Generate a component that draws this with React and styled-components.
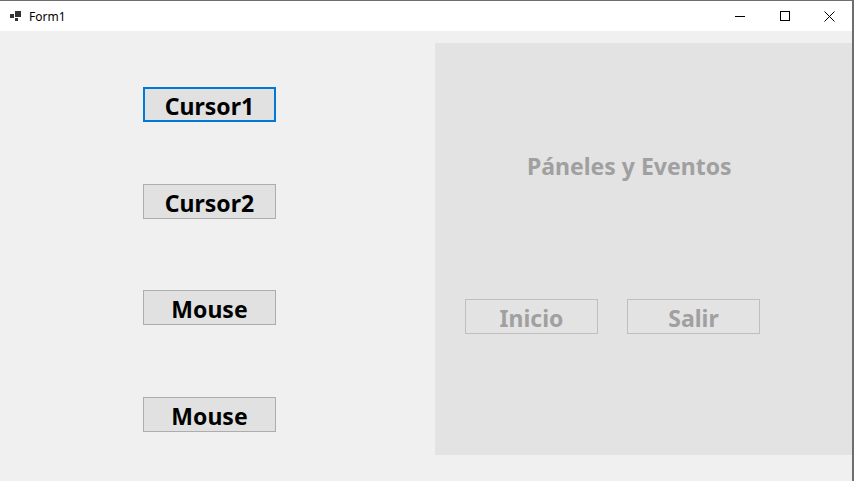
import React from "react";
import styled, { createGlobalStyle } from "styled-components";

const GlobalStyle = createGlobalStyle`
  html, body {
    margin: 0;
    padding: 0;
    background: #f0f0f0;
  }
  body {
    font-family: "Noto Sans", "Open Sans", "Liberation Sans", sans-serif;
  }
`;

const Window = styled.div`
  width: 854px;
  height: 481px;
  box-sizing: border-box;
  border-top: 1px solid #6e6e6e;
  border-right: 2px solid #6e6e6e;
  display: flex;
  flex-direction: column;
  background: #f0f0f0;
  overflow: hidden;
`;

const TitleBar = styled.div`
  height: 30px;
  background: #ffffff;
  display: flex;
  align-items: center;
  flex-shrink: 0;
`;

const AppIcon = styled.svg`
  margin-left: 10px;
  width: 12px;
  height: 12px;
`;

const Title = styled.span`
  margin-left: 7px;
  font-size: 12px;
  color: #000;
`;

const Controls = styled.div`
  margin-left: auto;
  display: flex;
`;

const ControlButton = styled.div`
  width: 45px;
  height: 30px;
  display: flex;
  align-items: center;
  justify-content: center;
`;

const Body = styled.div`
  flex: 1;
  display: flex;
`;

const LeftColumn = styled.div`
  width: 435px;
  flex-shrink: 0;
  display: flex;
  flex-direction: column;
  padding-left: 143px;
  box-sizing: border-box;
`;

const FormButton = styled.button`
  width: 133px;
  height: 35px;
  margin-top: ${({ $top }) => $top}px;
  box-sizing: border-box;
  background: ${({ $disabled }) => ($disabled ? "#e3e3e3" : "#e1e1e1")};
  border: ${({ $focused, $disabled }) =>
    $focused
      ? "2px solid #0078d7"
      : $disabled
      ? "1px solid #bfbfbf"
      : "1px solid #adadad"};
  color: ${({ $disabled }) => ($disabled ? "#a0a0a0" : "#000")};
  font-family: "Noto Sans", "Open Sans", "Liberation Sans", sans-serif;
  font-weight: 700;
  font-size: 23px;
  line-height: 1;
  padding: 4px 0 0;
  display: flex;
  align-items: center;
  justify-content: center;
`;

const Panel = styled.div`
  margin-top: 12px;
  width: 417px;
  height: 412px;
  background: #e3e3e3;
  display: flex;
  flex-direction: column;
`;

const PanelTitle = styled.div`
  margin-top: 107px;
  margin-left: 92px;
  font-size: 23px;
  font-weight: 700;
  color: #a0a0a0;
`;

const PanelButtons = styled.div`
  display: flex;
  gap: 29px;
  margin-left: 30px;
  margin-top: 117px;
`;

export default function App() {
  return (
    <>
      <GlobalStyle />
      <Window>
        <TitleBar>
          <AppIcon viewBox="0 0 12 12">
            <rect x="0" y="4" width="4" height="4" fill="#333" />
            <rect x="5" y="1" width="6" height="6" fill="#333" />
            <rect x="5" y="8" width="3" height="3" fill="#333" />
          </AppIcon>
          <Title>Form1</Title>
          <Controls>
            <ControlButton>
              <svg width="10" height="10" viewBox="0 0 10 10">
                <line x1="0" y1="5.5" x2="10" y2="5.5" stroke="#000" strokeWidth="1" />
              </svg>
            </ControlButton>
            <ControlButton>
              <svg width="10" height="10" viewBox="0 0 10 10">
                <rect x="0.5" y="0.5" width="9" height="9" fill="none" stroke="#000" strokeWidth="1" />
              </svg>
            </ControlButton>
            <ControlButton>
              <svg width="11" height="11" viewBox="0 0 11 11">
                <path d="M0.5 0.5 L10.5 10.5 M10.5 0.5 L0.5 10.5" stroke="#000" strokeWidth="1" />
              </svg>
            </ControlButton>
          </Controls>
        </TitleBar>
        <Body>
          <LeftColumn>
            <FormButton $top={56} $focused>
              Cursor1
            </FormButton>
            <FormButton $top={62}>Cursor2</FormButton>
            <FormButton $top={71}>Mouse</FormButton>
            <FormButton $top={72}>Mouse</FormButton>
          </LeftColumn>
          <Panel>
            <PanelTitle>Páneles y Eventos</PanelTitle>
            <PanelButtons>
              <FormButton $top={0} $disabled>
                Inicio
              </FormButton>
              <FormButton $top={0} $disabled>
                Salir
              </FormButton>
            </PanelButtons>
          </Panel>
        </Body>
      </Window>
    </>
  );
}
